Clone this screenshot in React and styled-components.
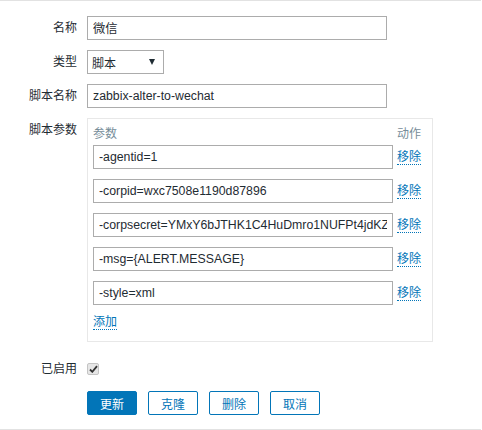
import React from "react";
import styled, { createGlobalStyle } from "styled-components";

const Global = createGlobalStyle`
  html, body { margin: 0; padding: 0; background: #fff; }
  body { font-family: "Liberation Sans", Arial, "Noto Sans CJK SC", sans-serif; font-size: 12px; color: #1f2c33; }
`;

const Page = styled.div`
  width: 481px;
  height: 430px;
  box-sizing: border-box;
  border-top: 1px solid #e2e2e2;
  border-bottom: 1px solid #e2e2e2;
  padding-top: 15px;
`;

const Row = styled.div`
  display: grid;
  grid-template-columns: 77px 1fr;
  column-gap: 10px;
  align-items: ${(p) => (p.$top ? "start" : "center")};
  margin-bottom: ${(p) => p.$mb ?? 10}px;
`;

const Label = styled.div`
  text-align: right;
  line-height: 24px;
  color: #1f2c33;
  white-space: nowrap;
`;

const TextInput = styled.input`
  box-sizing: border-box;
  width: 300px;
  height: 24px;
  border: 1px solid #acacac;
  padding: 0 5px;
  margin: 0;
  font: inherit;
  font-size: 12.3px;
  color: #1f2c33;
  background: #fff;
  outline: none;
`;

const Select = styled.div`
  box-sizing: border-box;
  width: 77px;
  height: 24px;
  border: 1px solid #acacac;
  display: flex;
  align-items: center;
  justify-content: space-between;
  padding: 0 8px 0 4px;
  color: #1f2c33;
`;

const Arrow = styled.span`
  width: 0;
  height: 0;
  border-left: 3.5px solid transparent;
  border-right: 3.5px solid transparent;
  border-top: 6px solid #1f2c33;
`;

const Table = styled.div`
  box-sizing: border-box;
  width: 346px;
  border: 1px solid #e8e8e8;
  padding: 4px 10px 11px 5px;
  display: flex;
  flex-direction: column;
`;

const ParamGrid = styled.div`
  display: grid;
  grid-template-columns: 300px 1fr;
  column-gap: 4px;
  row-gap: 10px;
  align-items: center;
`;

const Head = styled.div`
  color: #768d99;
  line-height: 22px;
  height: 22px;
  margin-bottom: -10px;
`;

const Link = styled.a`
  color: #0275b8;
  text-decoration: none;
  border-bottom: 1px dotted #0275b8;
  justify-self: start;
  line-height: 14px;
  cursor: pointer;
`;

const AddWrap = styled.div`
  margin-top: 10px;
  line-height: 18px;
  display: flex;
`;

const CheckCell = styled.div`
  display: flex;
  align-items: center;
  height: 24px;
`;

const Check = styled.span`
  box-sizing: border-box;
  width: 12px;
  height: 12px;
  border: 1px solid #c4c4c4;
  background: #e6e6e6;
  display: inline-flex;
  align-items: center;
  justify-content: center;
  border-radius: 2px;
`;

const Buttons = styled.div`
  display: flex;
  gap: 11px;
`;

const Button = styled.button`
  box-sizing: border-box;
  height: 24px;
  padding: 0 12px;
  min-width: 50px;
  border-radius: 2px;
  border: 1px solid #0275b8;
  background: ${(p) => (p.$primary ? "#0275b8" : "#fff")};
  color: ${(p) => (p.$primary ? "#fff" : "#0275b8")};
  font: inherit;
  font-size: 12px;
  cursor: pointer;
`;

const params = [
  "-agentid=1",
  "-corpid=wxc7508e1190d87896",
  "-corpsecret=YMxY6bJTHK1C4HuDmro1NUFPt4jdKZ",
  "-msg={ALERT.MESSAGE}",
  "-style=xml",
];

export default function App() {
  return (
    <>
      <Global />
      <Page>
        <Row>
          <Label>名称</Label>
          <TextInput defaultValue="微信" />
        </Row>
        <Row>
          <Label>类型</Label>
          <Select>
            <span>脚本</span>
            <Arrow />
          </Select>
        </Row>
        <Row>
          <Label>脚本名称</Label>
          <TextInput defaultValue="zabbix-alter-to-wechat" />
        </Row>
        <Row $top $mb={15}>
          <Label>脚本参数</Label>
          <Table>
            <ParamGrid>
              <Head>参数</Head>
              <Head>动作</Head>
              {params.map((p) => (
                <React.Fragment key={p}>
                  <TextInput defaultValue={p} />
                  <Link>移除</Link>
                </React.Fragment>
              ))}
            </ParamGrid>
            <AddWrap>
              <Link>添加</Link>
            </AddWrap>
          </Table>
        </Row>
        <Row>
          <Label>已启用</Label>
          <CheckCell>
            <Check>
              <svg width="9" height="8" viewBox="0 0 9 8">
                <path d="M1 4.5 L3.3 6.8 L8 1.2" fill="none" stroke="#333" strokeWidth="1.8" />
              </svg>
            </Check>
          </CheckCell>
        </Row>
        <Row>
          <div />
          <Buttons>
            <Button $primary>更新</Button>
            <Button>克隆</Button>
            <Button>删除</Button>
            <Button>取消</Button>
          </Buttons>
        </Row>
      </Page>
    </>
  );
}
